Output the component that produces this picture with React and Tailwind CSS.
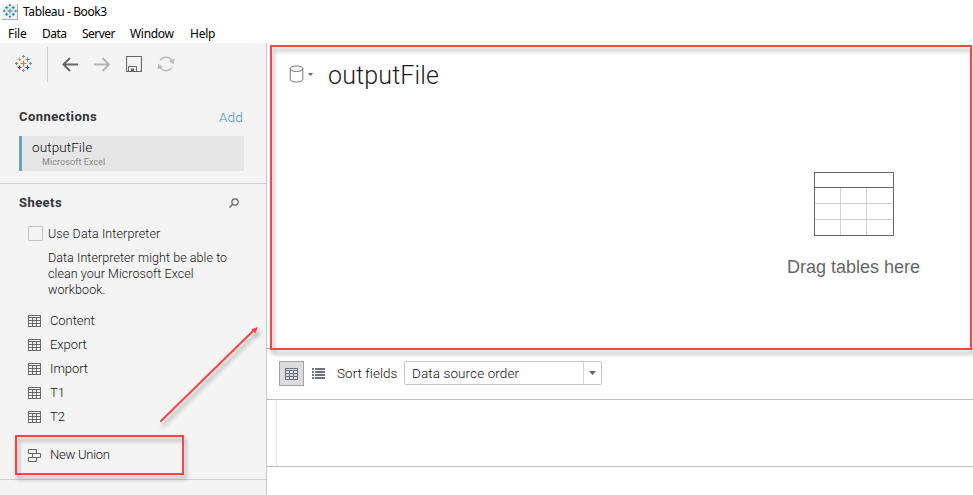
import React from "react";

const sheets = ["Content", "Export", "Import", "T1", "T2"];

function Plus({ x, y, r = 1.5, c }) {
  return <path d={`M${x - r} ${y}H${x + r}M${x} ${y - r}V${y + r}`} stroke={c} strokeWidth="1.2" />;
}

function TableauLogo({ colors, size }) {
  const [a, b, c, d, e, f] = colors;
  return (
    <svg width={size} height={size} viewBox="0 0 17 17" fill="none">
      <Plus x={8.5} y={8.5} r={3} c={a} />
      <Plus x={4.5} y={4.5} r={2} c={b} />
      <Plus x={12.5} y={4.5} r={2} c={c} />
      <Plus x={4.5} y={12.5} r={2} c={d} />
      <Plus x={12.5} y={12.5} r={2} c={e} />
      <Plus x={8.5} y={1.5} c={f} />
      <Plus x={8.5} y={15.5} c={f} />
      <Plus x={1.5} y={8.5} c={c} />
      <Plus x={15.5} y={8.5} c={f} />
    </svg>
  );
}

function SheetIcon({ color = "#666" }) {
  return (
    <svg width="13" height="12" viewBox="0 0 13 12" fill="none" stroke={color} shapeRendering="crispEdges">
      <path d="M.5 .5H12.5V11.5H.5ZM.5 2.5H12.5M.5 5.5H12.5M.5 8.5H12.5M4.5 2.5V11.5M8.5 2.5V11.5" />
    </svg>
  );
}

function UnionIcon() {
  return (
    <svg width="13" height="13" viewBox="0 0 13 13" fill="none" stroke="#666">
      <path d="M.5 .5H8.5V4.5H.5ZM4.5 4.5H12.5V8.5H4.5ZM.5 8.5H8.5V12.5H.5Z" />
    </svg>
  );
}

function Toolbar() {
  return (
    <div className="flex h-[42px] items-center">
      <div className="-mt-px ml-[15px] flex"><TableauLogo size={17} colors={["#e8762d", "#e89b4b", "#5b879b", "#c72037", "#1f457e", "#7b93b0"]} /></div>
      <div className="ml-[15px] h-[35px] w-px bg-[#cfcfcf]" />
      <svg className="ml-[14px]" width="17" height="15" fill="none" stroke="#666" strokeWidth="2"><path d="M16 7.5H1.5M8 1L1.5 7.5L8 14" /></svg>
      <svg className="ml-[15px]" width="17" height="15" fill="none" stroke="#b4b4b4" strokeWidth="2"><path d="M0 7.5H15M8.5 1L15 7.5L8.5 14" /></svg>
      <svg className="ml-[15px]" width="16" height="16" fill="none" stroke="#666"><path d="M.5 .5H15.5V15.5H.5Z" strokeWidth="1.2" /><path d="M2.5 15.5V10.5H10.5V15.5" /><path d="M5 12.5H8V15H5Z" fill="#666" stroke="none" /></svg>
      <svg className="ml-[15px]" width="18" height="16" fill="none" stroke="#b8b8b8" strokeWidth="1.3"><path d="M3 4.5A7 7 0 0 1 15.2 5.2M15 11.5A7 7 0 0 1 2.8 10.8" /><path d="M12 5L17.5 2.8L16.8 8.2ZM6 11L.5 13.2L1.2 7.8Z" fill="#b8b8b8" stroke="none" /></svg>
    </div>
  );
}

function Sidebar() {
  return (
    <aside className="flex w-[267px] shrink-0 flex-col border-r border-[#c9c9c9] bg-[#f4f4f4]">
      <Toolbar />
      <div className="flex h-[51px] items-end justify-between pr-[23px] pb-[9px] pl-[19px] leading-[20px]">
        <h2 className="text-[13px] font-bold tracking-[0.43px] text-[#333]">Connections</h2>
        <a className="text-[13.5px] font-light tracking-[0.2px] text-[#3f8fbb]">Add</a>
      </div>
      <div className="ml-[19px] h-[35px] w-[225px] border-l-[3px] border-[#66a3c5] bg-[#e6e6e6] pl-[10px]">
        <div className="pt-[3px] text-[13.5px] leading-[17px] font-light tracking-[0.1px] text-[#111]">outputFile</div>
        <div className="pl-[10px] text-[9px] leading-[12px] tracking-[0.08px] text-[#888]">Microsoft Excel</div>
      </div>
      <div className="mt-[12px] h-px bg-[#d0d0d0]" />
      <div className="flex h-[37px] items-center justify-between pr-[27px] pl-[19px]">
        <h2 className="text-[13px] font-bold tracking-[0.43px] text-[#333]">Sheets</h2>
        <svg width="10" height="10" fill="none" stroke="#666" strokeWidth="1.2"><circle cx="6" cy="4" r="3.2" /><path d="M3.7 6.3L.5 9.5" strokeWidth="1.5" /></svg>
      </div>
      <div className="mt-[5px] ml-[28px] flex items-center gap-[5px]">
        <div className="h-[15px] w-[15px] rounded-[1px] border border-[#c5c5c5]" />
        <span className="pt-px text-[12.5px] leading-[14px] font-light tracking-[0.13px] text-[#111]">Use Data Interpreter</span>
      </div>
      <p className="mt-[9px] ml-[48px] text-[12.5px] leading-[16px] font-light tracking-[0.07px] whitespace-nowrap text-[#111]">
        Data Interpreter might be able to<br />clean your Microsoft Excel<br />workbook.
      </p>
      <ul className="mt-[11px]">
        {sheets.map((name) => (
          <li key={name} className="flex h-[24px] items-center pl-[28px]">
            <SheetIcon />
            <span className="ml-[9px] text-[13px] font-light tracking-[-0.08px] text-[#111]">{name}</span>
          </li>
        ))}
      </ul>
      <div className="mt-[14px] flex h-[24px] items-center pl-[28px]">
        <UnionIcon />
        <span className="ml-[9px] text-[13px] font-light tracking-[-0.25px] text-[#111]">New Union</span>
      </div>
      <div className="mt-[12px] h-px bg-[#d0d0d0]" />
    </aside>
  );
}

function Canvas() {
  return (
    <section className="flex h-[306px] shrink-0 flex-col border-b border-[#bdbdbd]">
      <div className="mt-[13px] flex h-[36px] items-center pl-[22px]">
        <svg width="15" height="18" fill="none" stroke="#777"><path d="M1.2 3.5V14.2C1.2 18 13.8 18 13.8 14.2V3.5" /><ellipse cx="7.5" cy="3.7" rx="6.3" ry="2.8" /></svg>
        <svg className="ml-[4px]" width="5" height="3"><path d="M0 0H5L2.5 3Z" fill="#666" /></svg>
        <h1 className="mt-[3px] ml-[15px] text-[25px] leading-[30px] font-light tracking-[0.15px] text-[#1c1c1c]">outputFile</h1>
      </div>
      <div className="mt-[80px] ml-[520px] flex w-[133px] flex-col items-center">
        <svg width="80" height="64" fill="none" shapeRendering="crispEdges">
          <path d="M1 31.5H79M1 47.5H79M26.5 16V63M52.5 16V63" stroke="#d0d0d0" />
          <path d="M.5 .5H79.5V63.5H.5ZM1 15.5H79" stroke="#666" />
        </svg>
        <div className="mt-[19px] font-['Liberation_Sans',sans-serif] text-[18px] leading-[24px] whitespace-nowrap text-[#666]">Drag tables here</div>
      </div>
    </section>
  );
}

function SortBar() {
  return (
    <div className="flex h-[50px] shrink-0 items-start pt-[12px] pl-[12px] text-[13.5px] font-light text-[#111]">
      <div className="flex h-[25px] w-[25px] items-center justify-center border border-[#a2a2a2] bg-[#dcdcdc]"><SheetIcon color="#6b7487" /></div>
      <svg className="mt-[7px] ml-[8px]" width="13" height="11" fill="#6b7487" shapeRendering="crispEdges">
        <path d="M0 0h2v2H0zM3 0h10v2H3zM0 3h2v2H0zM3 3h10v2H3zM0 6h2v2H0zM3 6h10v2H3zM0 9h2v2H0zM3 9h10v2H3z" />
      </svg>
      <span className="ml-[12px] w-[67px] leading-[24px] tracking-[0.05px] whitespace-nowrap">Sort fields</span>
      <div className="flex h-[24px] w-[198px] rounded-[2px] border border-[#c6c6c6]">
        <span className="flex-1 pl-[7px] leading-[22px] tracking-[0.1px]">Data source order</span>
        <span className="flex w-[18px] items-center justify-center border-l border-[#d4d4d4]"><svg width="7" height="4"><path d="M0 0H7L3.5 4Z" fill="#666" /></svg></span>
      </div>
    </div>
  );
}

export default function App() {
  return (
    <div className="relative flex h-[495px] w-[973px] flex-col overflow-hidden bg-white font-[Roboto,sans-serif]">
      <header className="h-[43px] shrink-0 font-['Noto_Sans',sans-serif] text-[12px] text-black">
        <div className="flex h-[23px] items-center pl-[2px]">
          <div className="flex h-[16px] w-[16px] items-center justify-center border-r border-b border-[#aaa] bg-[#f4f4f4]"><TableauLogo size={14} colors={["#2a7fae", "#2a7fae", "#2a7fae", "#2a7fae", "#2a7fae", "#2a7fae"]} /></div>
          <span className="ml-[5px] tracking-[-0.38px]">Tableau - Book3</span>
        </div>
        <nav className="flex h-[20px] items-center gap-[16px] pt-[2px] pl-[8px] leading-[20px]">
          <span className="w-[18px] tracking-[-0.1px]">File</span><span className="w-[24px] tracking-[-0.5px]">Data</span><span className="w-[32px] tracking-[-0.55px]">Server</span><span className="w-[44px] tracking-[-0.3px]">Window</span><span className="tracking-[-0.25px]">Help</span>
        </nav>
      </header>
      <div className="flex min-h-0 flex-1">
        <Sidebar />
        <main className="flex min-w-0 flex-1 flex-col">
          <Canvas />
          <SortBar />
          <div className="h-[68px] shrink-0 border-y border-[#bdbdbd] pl-[9px]"><div className="h-full border-l border-[#e8e8e8]" /></div>
        </main>
      </div>
      <svg className="absolute inset-0" width="973" height="495" fill="none" stroke="#fb4545">
        <g className="drop-shadow-[2px_4px_2px_rgba(0,0,0,0.35)]">
          <rect x="271" y="46" width="700" height="303" strokeWidth="2" />
          <rect x="16" y="436" width="167" height="38" strokeWidth="2" />
          <path d="M161 421L254 330" strokeWidth="2" strokeLinecap="round" />
          <path d="M258 327L255.5 333.5L251.5 329.3Z" fill="#fb4545" stroke="none" />
        </g>
      </svg>
    </div>
  );
}
